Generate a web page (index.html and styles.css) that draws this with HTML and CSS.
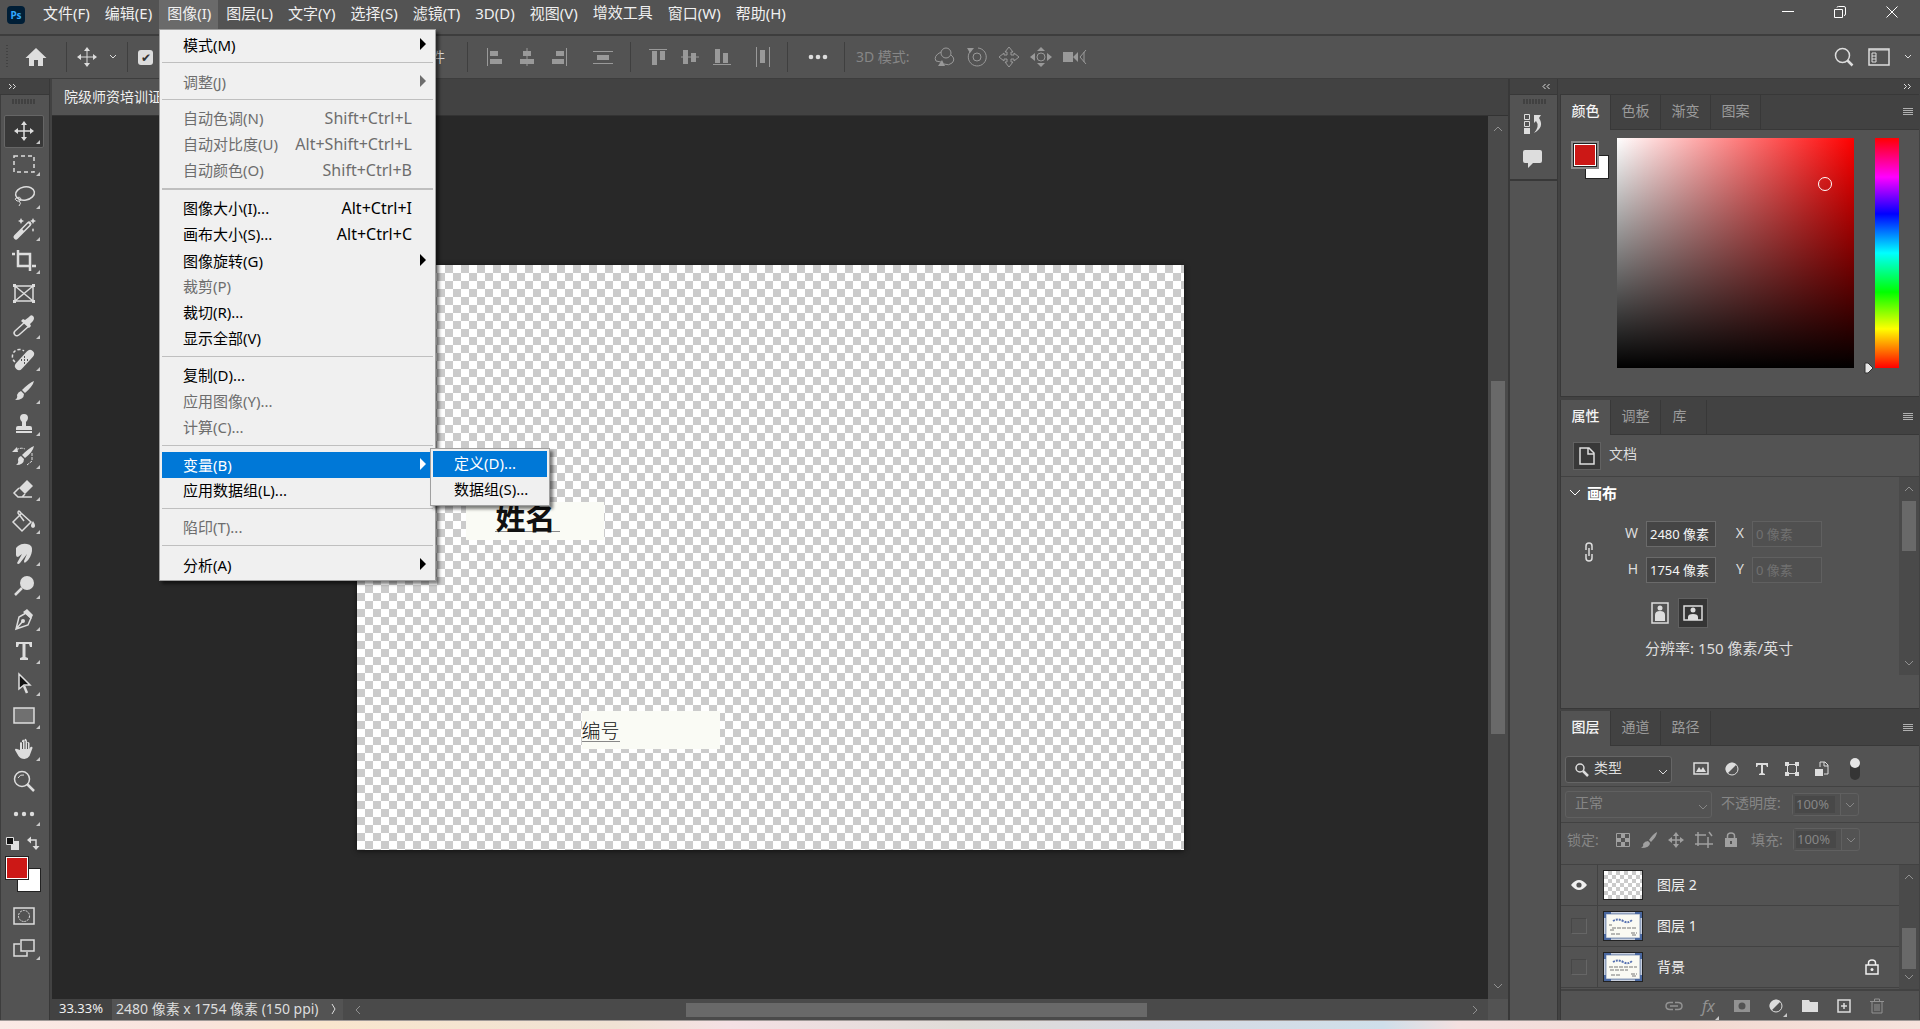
FILE: index.html
```html
<!DOCTYPE html>
<html lang="zh-CN">
<head>
    <meta charset="UTF-8">
    <meta name="viewport" content="width=device-width, initial-scale=1.0">
    <title>Photoshop</title>
    <link rel="stylesheet" href="styles.css">
</head>
<body>

<header class="menubar">
    <span class="logo">Ps</span>
    <nav class="menus">
        <button>文件(F)</button>
        <button>编辑(E)</button>
        <button class="open">图像(I)</button>
        <button>图层(L)</button>
        <button>文字(Y)</button>
        <button>选择(S)</button>
        <button>滤镜(T)</button>
        <button>3D(D)</button>
        <button>视图(V)</button>
        <button class="plugin">增效工具</button>
        <button>窗口(W)</button>
        <button>帮助(H)</button>
    </nav>
    <div class="window-buttons">
        <button aria-label="最小化"><svg width="14" height="14"><path d="M1 6.500h12" class="line"/></svg></button>
        <button aria-label="还原"><svg width="14" height="14"><path d="M1.500 4.500h8v8h-8zM4 2.500Q4 1.500 5.500 1.500H11q1.500 0 1.500 1.500v6q0 1.500-1.500 1.500" class="line"/></svg></button>
        <button aria-label="关闭"><svg width="14" height="14"><path d="M1.500 1.500l11 11M12.500 1.500l-11 11" class="line"/></svg></button>
    </div>
</header>

<div class="options">
    <span class="grip-v"></span>
    <button class="home" aria-label="主页"><svg width="22" height="20"><path d="M11 1L0.500 11H4v8h5v-6h4v6h5v-8h3.500z" class="fill"/></svg></button>
    <span class="divider"></span>
    <button class="current-tool" aria-label="移动工具">
        <svg width="20" height="20" viewBox="0 0 20 20"><path d="M10 3v14M3 10h14" class="line"/><path d="M10 0l3 4H7zM10 20l3-4H7zM0 10l4-3v6zM20 10l-4-3v6z" class="fill"/></svg>
        <svg width="8" height="6"><path d="M1 1l3 3 3-3" class="line"/></svg>
    </button>
    <span class="divider"></span>
    <div class="auto-select"><input type="checkbox" aria-label="自动选择" checked></div>
    <select class="auto-target" aria-label="自动选择对象"><option>图层</option></select>
    <label class="transform-controls"><input type="checkbox">显示变换控件</label>
    <span class="divider"></span>
    <div class="align-group">
        <button aria-label="左对齐"><svg width="18" height="20"><path d="M1.500 1v18" class="line"/><path d="M4 4h8v5H4zM4 12h12v5H4z" class="fill"/></svg></button>
        <button aria-label="水平居中对齐"><svg width="18" height="20"><path d="M9 1v18" class="line"/><path d="M5 4h8v5H5zM2 12h14v5H2z" class="fill"/></svg></button>
        <button aria-label="右对齐"><svg width="18" height="20"><path d="M16.500 1v18" class="line"/><path d="M6 4h8v5H6zM2 12h12v5H2z" class="fill"/></svg></button>
        <button class="spread" aria-label="垂直分布"><svg width="22" height="20"><path d="M1 4.500h20M1 16.500h20" class="line"/><path d="M5 8h12v5H5z" class="fill"/></svg></button>
    </div>
    <span class="divider"></span>
    <div class="align-group">
        <button aria-label="顶对齐"><svg width="18" height="20"><path d="M0 2.500h18" class="line"/><path d="M3 4h5v14H3zM11 4h5v9h-5z" class="fill"/></svg></button>
        <button aria-label="垂直居中对齐"><svg width="18" height="20"><path d="M0 10h18" class="line"/><path d="M2 3h5v14H2zM10 6h5v9h-5z" class="fill"/></svg></button>
        <button aria-label="底对齐"><svg width="18" height="20"><path d="M0 17.500h18" class="line"/><path d="M2 2h5v14H2zM10 6h5v10h-5z" class="fill"/></svg></button>
        <button class="spread" aria-label="水平分布"><svg width="16" height="22"><path d="M1.500 1v20M14.500 1v20" class="line"/><path d="M5 4h5v13H5z" class="fill"/></svg></button>
    </div>
    <span class="divider"></span>
    <button class="more" aria-label="更多"><svg width="20" height="6"><circle cx="3" cy="3" r="2.300" class="fill"/><circle cx="10" cy="3" r="2.300" class="fill"/><circle cx="17" cy="3" r="2.300" class="fill"/></svg></button>
    <span class="divider"></span>
    <span class="mode-label">3D 模式:</span>
    <div class="mode-icons">
        <svg width="22" height="20"><circle cx="13" cy="6" r="5" class="line"/><path d="M8 5q-8 4-5 9l5 1M18 8q5 4 1 8-3 3-8 1" class="line"/><path d="M5 19l4-6 3 6z" class="fill"/></svg>
        <svg width="22" height="20"><circle cx="11" cy="10" r="4" class="line"/><path d="M5 3.500a9 9 0 1 0 7-2.500" class="line"/><path d="M1 1h7l-4 5z" class="fill"/></svg>
        <svg width="20" height="20"><path d="M10 0l4 5h-2v3h3V6l5 4-5 4v-2h-3v3h2l-4 5-4-5h2v-3H5v2l-5-4 5-4v2h3V5H6z" class="line"/></svg>
        <svg width="22" height="20"><circle cx="11" cy="10" r="4" class="line"/><path d="M11 0l4 4H7zM11 20l4-4H7zM0 10l5-4v8zM22 10l-5-4v8z" class="fill"/></svg>
        <svg width="24" height="20"><path d="M0 5h10v10H0zM10 10l5-5v10z" class="fill"/><path d="M23 3l-6 7 6 7M21 5v10" class="line"/></svg>
    </div>
    <div class="options-end">
        <button aria-label="搜索"><svg width="20" height="20"><circle cx="8.500" cy="8.500" r="7" class="line thick"/><path d="M13.500 13.500l5 5" class="line heavy"/></svg></button>
        <button aria-label="工作区"><svg width="22" height="18"><path d="M1 1h20v16H1z" class="line thick"/><path d="M1 2h20M4 5h4v9H4zM4 8h4M4 11h4" class="line"/></svg></button>
        <button aria-label="选择工作区"><svg width="8" height="6"><path d="M1 1l3 3 3-3" class="line"/></svg></button>
    </div>
</div>

<div class="workspace">
    <aside class="toolbar">
        <div class="strip"><svg width="9" height="7"><path d="M1 1l2.500 2.500L1 6M5 1l2.500 2.500L5 6" class="line"/></svg></div>
        <div class="tool-body">
            <span class="grip"></span>
            <div class="tools">
                <button class="sub selected" aria-label="移动"><svg width="22" height="22" viewBox="0 0 22 22"><path d="M11 3v16M3 11h16" class="line thick"/><path d="M11 1l3 4H8zM11 21l3-4H8zM1 11l4-3v6zM21 11l-4-3v6z" class="fill"/></svg></button>
                <button class="sub" aria-label="矩形选框"><svg width="22" height="22"><path d="M1 3h20v16H1z" class="line thick" stroke-dasharray="4 3"/></svg></button>
                <button class="sub" aria-label="套索"><svg width="22" height="22"><ellipse cx="12" cy="8.500" rx="9.500" ry="6.500" transform="rotate(-10 12 8.500)" class="line thick"/><path d="M3 13q4-2 5 1 0 3-4 2-3-2-1-3M6 16q3 2 0 5" class="line"/></svg></button>
                <button class="sub" aria-label="魔棒"><svg width="24" height="22"><path d="M4 19L17 6" stroke-width="5" class="line cap"/><path d="M11 12l6-6" class="dark-line"/><path d="M9 0l1 2 2 1-2 1-1 2-1-2-2-1 2-1zM21 0l1 2 2 1-2 1-1 2-1-2-2-1 2-1zM21 10l1 2-1 2-1-2z" class="fill"/></svg></button>
                <button class="sub" aria-label="裁剪"><svg width="24" height="22"><path d="M6 0v16h12M0 4h3M6 4h12v17M20 16h4" class="line heavy"/></svg></button>
                <button aria-label="图框"><svg width="22" height="20"><path d="M2 2h18v15H2zM2 2l18 15M20 2L2 17" class="line thick"/><path d="M0 0h3v3H0zM19 0h3v3h-3zM0 16h3v3H0zM19 16h3v3h-3z" class="fill"/></svg></button>
                <button class="sub" aria-label="吸管"><svg width="22" height="22"><path d="M12 7l4 4-9 8q-3 3-5 1t0-4z" class="line thick"/><path d="M16 2q2-3 4-1t0 5l-3 3 1 2-2 2-8-7 2-2 2 1z" class="fill"/></svg></button>
                <button class="sub" aria-label="污点修复"><svg width="24" height="24"><path d="M3 15a7 7 0 1 1 9-11" class="line thick" stroke-dasharray="3 2"/><path d="M7 19L18 7" stroke-width="8" class="line cap"/><path d="M9 13h1M12 16h1M12 10h1M15 13h1M12 13h1" class="dark-line"/></svg></button>
                <button class="sub" aria-label="画笔"><svg width="22" height="22"><path d="M21 1q-1 5-9 12l-3-3Q16 3 21 1zM8 11l3 3q0 6-9 6 3-2 2-5 1-3 4-4z" class="fill"/></svg></button>
                <button class="sub" aria-label="仿制图章"><svg width="20" height="22"><path d="M10 1a4 4 0 0 1 4 4q0 2-2 4v4h4q2 0 2 2v2H2v-2q0-2 2-2h4V9Q6 7 6 5a4 4 0 0 1 4-4zM2 18h16v2H2z" class="fill"/></svg></button>
                <button class="sub" aria-label="历史记录画笔"><svg width="24" height="22"><path d="M22 1q-1 6-9 12l-3-3Q17 3 22 1zM9 11l3 3q0 6-8 6 3-2 2-5 0-3 3-4zM0 7l5-5 1 5z" class="fill"/><path d="M4 5q5-3 9-1M20 8v8l-5 4" class="line" stroke-dasharray="3 1"/></svg></button>
                <button class="sub" aria-label="橡皮擦"><svg width="22" height="20"><path d="M14 1l6 6-8 8-6-6z" class="fill"/><path d="M6 9l-5 5 4 4h4l3-3M5 18h14" class="line thick"/></svg></button>
                <button class="sub" aria-label="油漆桶"><svg width="24" height="22"><path d="M9 4L1 12l9 9 9-9L9 3q-3-4-3 0l6 8" class="line thick"/><path d="M21 11q4 6 0 7-4-1 0-7z" class="fill"/></svg></button>
                <button class="sub" aria-label="涂抹"><svg width="20" height="22"><path d="M4 3q4-3 9-2 6 1 5 7-1 7-6 11-2 2-2-1l3-7-7 9q-2 2-3 0l5-9-4 3q-2 0-2-2V5z" class="fill"/></svg></button>
                <button class="sub" aria-label="减淡"><svg width="22" height="22"><circle cx="14" cy="8" r="7" class="fill"/><path d="M9 13l-7 7" class="line heavy"/></svg></button>
                <button class="sub" aria-label="钢笔"><svg width="20" height="22"><path d="M12 5l5 5-3 7-12 4L5 9zM2 21l7-8" class="line thick"/><circle cx="9" cy="13" r="2" class="fill"/><path d="M13 1l6 6-2 4-8-7z" class="fill"/></svg></button>
                <button class="sub" aria-label="文字"><svg width="20" height="22"><path d="M2 2h16v5h-2l-1-3h-3.500v13l2.500 1v2H6v-2l2.500-1V4H5L4 7H2z" class="fill"/></svg></button>
                <button class="sub" aria-label="路径选择"><svg width="18" height="22"><path d="M9 13l3 7" class="line heavy"/><path d="M4 1l11 11H9l-5 4z" class="pointer"/></svg></button>
                <button class="sub" aria-label="矩形"><svg width="22" height="18"><path d="M1 1h20v15H1z" class="rect-tool"/></svg></button>
                <button class="sub" aria-label="抓手"><svg width="20" height="22"><path d="M6 12V5q1-2 2 0V3q1-3 2.500 0V2q1-3 2.500 1v2q1-2 2.500 0v6l1-2q2-1 2 1l-3 8q-2 3-5 3-4 0-6-3L1 12q0-2 2-1z" class="fill"/><path d="M8.500 4v7M11 3v8M13.500 5v6" class="dark-line thin"/></svg></button>
                <button aria-label="缩放"><svg width="22" height="22"><circle cx="9" cy="9" r="7.500" class="line thick"/><path d="M5 8q2-4 6-3" class="line"/><path d="M14 14l7 7" class="line heavy"/></svg></button>
                <button class="sub" aria-label="编辑工具栏"><svg width="22" height="8"><circle cx="3" cy="4" r="2.200" class="fill"/><circle cx="11" cy="4" r="2.200" class="fill"/><circle cx="19" cy="4" r="2.200" class="fill"/></svg></button>
            </div>
            <div class="mini">
                <button aria-label="默认颜色"><svg width="13" height="13"><path d="M5 4h8v9H5z" class="fill"/><path d="M.5.5h7v7h-7z" class="default-fg"/></svg></button>
                <button aria-label="切换颜色"><svg width="14" height="14"><path d="M3 4h6v7" class="line thick"/><path d="M0 4l4-3.500v7zM9 14l-3.500-4h7z" class="fill"/></svg></button>
            </div>
            <div class="swatches">
                <button class="bg" aria-label="背景色"></button>
                <button class="fg" aria-label="前景色"></button>
            </div>
            <div class="view-modes">
                <button aria-label="快速蒙版"><svg width="22" height="18"><path d="M1 1h20v16H1z" class="line thick"/><circle cx="11" cy="9" r="5.500" class="line" stroke-dasharray="2 1"/></svg></button>
                <button class="sub" aria-label="屏幕模式"><svg width="22" height="18"><path d="M8 1h13v11H8zM7 5H1v12h13v-4" class="line thick"/></svg></button>
            </div>
        </div>
    </aside>

    <main class="document">
        <div class="doc-tabs"><button>院级师资培训证</button></div>
        <div class="stage">
            <div class="viewport">
                <div class="artboard">
                    <div class="patch name"><u>姓名</u></div>
                    <div class="patch number"><u>编号</u></div>
                </div>
            </div>
            <div class="scroll-v">
                <svg width="10" height="6"><path d="M1 5l4-4 4 4" class="line"/></svg>
                <span class="thumb"></span>
                <svg width="10" height="6"><path d="M1 1l4 4 4-4" class="line"/></svg>
            </div>
        </div>
        <footer class="status">
            <span class="zoom">33.33%</span>
            <button class="doc-info">2480 像素 x 1754 像素 (150 ppi)
                <svg width="6" height="12"><path d="M1 1l3 5-3 5" class="line"/></svg>
            </button>
            <div class="scroll-h">
                <svg width="6" height="10"><path d="M5 1L1 5l4 4" class="line"/></svg>
                <span class="thumb"></span>
                <svg width="6" height="10"><path d="M1 1l4 4-4 4" class="line"/></svg>
            </div>
        </footer>
    </main>

    <aside class="dock">
        <div class="strip"><svg width="9" height="7"><path d="M3.500 1L1 3.500 3.500 6M7.500 1L5 3.500 7.500 6" class="line"/></svg></div>
        <div class="dock-icons">
            <span class="grip"></span>
            <button aria-label="历史记录"><svg width="20" height="22"><path d="M1.500 1.500h5v5h-5zM1.500 8.500h5v5h-5z" class="line"/><path d="M1 15h6v6H1zM11 2h7l-2 3q6 9-5 15 6-7 2-12l-2 2z" class="fill"/></svg></button>
            <button aria-label="注释"><svg width="20" height="20"><path d="M2 1h15q2 0 2 2v9q0 2-2 2h-7l-5 5v-5H2q-2 0-2-2V3q0-2 2-2z" class="fill"/></svg></button>
        </div>
        <div class="dock-rest"></div>
    </aside>

    <aside class="panels">
        <div class="strip"><svg width="9" height="7"><path d="M1 1l2.500 2.500L1 6M5 1l2.500 2.500L5 6" class="line"/></svg></div>

        <section class="panel color-panel">
            <div class="tabs">
                <button class="active">颜色</button><button>色板</button><button>渐变</button><button>图案</button>
                <span class="burger"></span>
            </div>
            <div class="color-body">
                <div class="swatches">
                    <button class="bg" aria-label="背景色"></button>
                    <button class="fg" aria-label="前景色"></button>
                </div>
                <div class="field"><span class="ring"></span></div>
                <div class="hue"><svg class="marker" width="10" height="12"><path d="M1 1h3l5 5-5 5H1z"/></svg></div>
            </div>
        </section>

        <section class="panel props-panel">
            <div class="tabs">
                <button class="active">属性</button><button>调整</button><button class="short">库</button>
                <span class="burger"></span>
            </div>
            <div class="doc-row">
                <span class="doc-icon"><svg width="16" height="18"><path d="M1 1h9l5 5v11H1zM9 1v6h6" class="line thick"/></svg></span>
                <span class="doc-label">文档</span>
            </div>
            <div class="props">
                <div class="props-main">
                    <h3><svg width="12" height="8"><path d="M1 1l5 5 5-5" class="line"/></svg>画布</h3>
                    <div class="size-grid">
                        <svg class="chain" width="12" height="20"><path d="M3 8V4q0-3 3-3t3 3v4M3 12v4q0 3 3 3t3-3v-4M6 6v8" class="line thick"/></svg>
                        <label for="w">W</label><input id="w" value="2480 像素">
                        <label for="x">X</label><input id="x" value="0 像素" disabled>
                        <label for="h">H</label><input id="h" value="1754 像素">
                        <label for="y">Y</label><input id="y" value="0 像素" disabled>
                    </div>
                    <div class="orient">
                        <button aria-label="纵向"><svg width="18" height="22"><path d="M1 1h16v20H1z" class="line thick"/><circle cx="9" cy="6" r="2.500" class="fill"/><path d="M4 19v-6q0-4 5-4t5 4v6z" class="fill"/></svg></button>
                        <button class="on" aria-label="横向"><svg width="20" height="16"><path d="M1 1h18v14H1z" class="line thick"/><circle cx="10" cy="5" r="2.500" class="fill"/><path d="M5 15v-3q0-3 5-3t5 3v3z" class="fill"/></svg></button>
                    </div>
                    <p>分辨率: 150 像素/英寸</p>
                </div>
                <div class="scroll-v">
                    <svg width="10" height="6"><path d="M1 5l4-4 4 4" class="line"/></svg>
                    <span class="thumb"></span>
                    <svg width="10" height="6"><path d="M1 1l4 4 4-4" class="line"/></svg>
                </div>
            </div>
        </section>

        <section class="panel layers-panel">
            <div class="tabs">
                <button class="active">图层</button><button>通道</button><button>路径</button>
                <span class="burger"></span>
            </div>
            <div class="filter-row">
                <div class="pick kind">
                    <svg class="lens" width="14" height="14"><circle cx="5" cy="5" r="4" class="line thick"/><path d="M8 8l5 5" class="line heavy"/></svg>
                    <select aria-label="筛选类型"><option>类型</option></select>
                    <svg class="caret" width="10" height="6"><path d="M1 1l4 4 4-4" class="line"/></svg>
                </div>
                <div class="filters">
                    <button aria-label="像素图层"><svg width="16" height="14"><path d="M1 1h14v11H1z" class="line thick"/><path d="M3 10l3-5 2 3 2-3 3 5z" class="fill"/></svg></button>
                    <button aria-label="调整图层"><svg width="14" height="14"><circle cx="7" cy="7" r="6" class="line"/><path d="M11.500 2.500A6.300 6.300 0 1 0 2.500 11.500z" class="fill"/></svg></button>
                    <button aria-label="文字图层"><svg width="14" height="14"><path d="M1 1h12v4h-1l-1-2H8v8l2 1v1H4v-1l2-1V3H3L2 5H1z" class="fill"/></svg></button>
                    <button aria-label="形状图层"><svg width="14" height="14"><path d="M2.500 2.500h9v9h-9z" class="line"/><path d="M0 0h4v4H0zM10 0h4v4h-4zM0 10h4v4H0zM10 10h4v4h-4z" class="fill"/></svg></button>
                    <button aria-label="智能对象"><svg width="14" height="16"><path d="M5 6V1h5l3 3v9H9M9 1v4h4" class="line"/><path d="M0 8h8v7H0z" class="fill"/></svg></button>
                    <input type="checkbox" class="toggle" aria-label="打开图层过滤" checked>
                </div>
            </div>
            <div class="blend-row">
                <div class="pick blend">
                    <select aria-label="混合模式" disabled><option>正常</option></select>
                    <svg class="caret" width="10" height="6"><path d="M1 1l4 4 4-4" class="line"/></svg>
                </div>
                <label for="opacity">不透明度:</label>
                <div class="percent"><input id="opacity" value="100%" disabled><button disabled aria-label="不透明度滑块"><svg width="10" height="6"><path d="M1 1l4 4 4-4" class="line"/></svg></button></div>
            </div>
            <div class="lock-row">
                <span>锁定:</span>
                <div class="locks">
                    <svg width="14" height="14"><path d="M.5.5h13v13H.5z" class="line"/><path d="M5 1h4v4H5zM1 5h4v4H1zM9 5h4v4H9zM5 9h4v4H5z" class="fill"/></svg>
                    <svg width="16" height="16"><path d="M16 0q0 4-6 10L8 8q4-6 8-8zM7 9l2 2q0 5-9 5 3-2 2-4 2-3 5-3z" class="fill"/></svg>
                    <svg width="16" height="16"><path d="M8 2v12M2 8h12" class="line thick"/><path d="M8 0l3 4H5zM8 16l3-4H5zM0 8l4-3v6zM16 8l-4-3v6z" class="fill"/></svg>
                    <svg width="18" height="16"><path d="M3 0v14M0 3h11M13 5v11M0 12h18M14 0l3 4" class="line thick"/></svg>
                    <svg width="14" height="16"><path d="M3.500 7V4q0-3 3.500-3t3.500 3v3" class="line thick"/><path d="M1 6h12v9H1z" class="fill"/><path d="M7 9v3" class="dark-line"/></svg>
                </div>
                <label for="fill">填充:</label>
                <div class="percent"><input id="fill" value="100%" disabled><button disabled aria-label="填充滑块"><svg width="10" height="6"><path d="M1 1l4 4 4-4" class="line"/></svg></button></div>
            </div>
            <div class="layers">
                <ul>
                    <li>
                        <span class="vis"><svg width="16" height="10"><path d="M0 5q8-10 16 0-8 10-16 0z" class="fill"/><circle cx="8" cy="5" r="2.600" class="iris"/></svg></span>
                        <span class="thumbnail clear"></span>图层 2
                    </li>
                    <li>
                        <span class="vis"><span class="off"></span></span>
                        <span class="thumbnail"><svg width="38" height="28"><path d="M1.500 1.500h35v25h-35z" class="cert"/><path d="M1 6V1h6M31 1h6v5M37 22v5h-6M7 27H1v-5" class="cert-corner"/><path d="M9 9q5-3 10 0t9-1" class="cert-title"/><path d="M5 13h3M8 16h24M6 18h5M7 22h9M27 21h6M28 23h5" class="cert-text"/></svg></span>图层 1
                    </li>
                    <li>
                        <span class="vis"><span class="off"></span></span>
                        <span class="thumbnail"><svg width="38" height="28"><path d="M1.500 1.500h35v25h-35z" class="cert"/><path d="M1 6V1h6M31 1h6v5M37 22v5h-6M7 27H1v-5" class="cert-corner"/><path d="M9 9q5-3 10 0t9-1" class="cert-title"/><path d="M5 14h28M6 17h18M7 22h9M27 21h6M28 23h5" class="cert-text"/></svg></span>背景
                        <svg class="padlock" width="14" height="16"><path d="M3.500 6V4q0-3 3.500-3t3.500 3v2M1 6h12v9H1z" class="line thick"/><circle cx="7" cy="10.500" r="1.500" class="fill"/></svg>
                    </li>
                </ul>
                <div class="scroll-v">
                    <svg width="10" height="6"><path d="M1 5l4-4 4 4" class="line"/></svg>
                    <span class="thumb"></span>
                    <svg width="10" height="6"><path d="M1 1l4 4 4-4" class="line"/></svg>
                </div>
            </div>
            <div class="layer-actions">
                <button disabled aria-label="链接图层"><svg width="18" height="10"><path d="M8 1.500H5q-4 0-4 3.500t4 3.500h3M10 1.500h3q4 0 4 3.500t-4 3.500h-3M5 5h8" class="line thick"/></svg></button>
                <button disabled class="fx sub">fx</button>
                <button disabled aria-label="添加蒙版"><svg width="16" height="12"><path d="M0 0h16v12H0z" class="fill"/><circle cx="8" cy="6" r="3.500" class="hole"/></svg></button>
                <button class="sub" aria-label="新建调整图层"><svg width="14" height="14"><circle cx="7" cy="7" r="6" class="line"/><path d="M11.500 2.500A6.300 6.300 0 1 0 2.500 11.500z" class="fill"/></svg></button>
                <button aria-label="新建组"><svg width="16" height="14"><path d="M0 1h7l1 2h8v10H0z" class="fill"/></svg></button>
                <button aria-label="新建图层"><svg width="14" height="14"><path d="M1 1h12v12H1zM7 4v6M4 7h6" class="line thick"/></svg></button>
                <button disabled aria-label="删除图层"><svg width="14" height="16"><path d="M0 3.500h14M4.500 3V1h5v2M2 4v11h10V4M5 6v7M7 6v7M9 6v7" class="line"/></svg></button>
            </div>
        </section>
    </aside>
</div>

<div class="desktop"></div>

<div class="popup image-menu" role="menu">
    <button class="has-sub" role="menuitem">模式(M)</button>
    <hr>
    <button class="has-sub" role="menuitem" disabled>调整(J)</button>
    <hr>
    <button role="menuitem" disabled>自动色调(N)<kbd>Shift+Ctrl+L</kbd></button>
    <button role="menuitem" disabled>自动对比度(U)<kbd>Alt+Shift+Ctrl+L</kbd></button>
    <button role="menuitem" disabled>自动颜色(O)<kbd>Shift+Ctrl+B</kbd></button>
    <hr class="double">
    <button role="menuitem">图像大小(I)...<kbd>Alt+Ctrl+I</kbd></button>
    <button role="menuitem">画布大小(S)...<kbd>Alt+Ctrl+C</kbd></button>
    <button class="has-sub" role="menuitem">图像旋转(G)</button>
    <button role="menuitem" disabled>裁剪(P)</button>
    <button role="menuitem">裁切(R)...</button>
    <button role="menuitem">显示全部(V)</button>
    <hr>
    <button role="menuitem">复制(D)...</button>
    <button role="menuitem" disabled>应用图像(Y)...</button>
    <button role="menuitem" disabled>计算(C)...</button>
    <hr>
    <button class="has-sub current" role="menuitem">变量(B)</button>
    <button role="menuitem">应用数据组(L)...</button>
    <hr>
    <button role="menuitem" disabled>陷印(T)...</button>
    <hr>
    <button class="has-sub" role="menuitem">分析(A)</button>
</div>

<div class="popup variable-menu" role="menu">
    <button class="current" role="menuitem">定义(D)...</button>
    <button role="menuitem">数据组(S)...</button>
</div>

</body>
</html>
```
FILE: styles.css
```css
* {
    box-sizing: border-box;
}
body {
    margin: 0;
    height: 100vh;
    display: flex;
    flex-direction: column;
    overflow: hidden;
    background: #535353;
    color: #dddddd;
    font-family: "Noto Sans", "Noto Sans CJK SC", sans-serif;
    font-size: 14px;
    line-height: 20px;
}
button, input, select {
    font: inherit;
    color: inherit;
}
button {
    padding: 0;
    border: 0;
    background: none;
}
svg {
    display: block;
    flex: none;
    overflow: visible;
}

/* icon strokes and fills */
.line {
    fill: none;
    stroke: currentColor;
}
.thick {
    stroke-width: 1.5;
}
.heavy {
    stroke-width: 2.5;
}
.cap {
    stroke-linecap: round;
}
.fill {
    fill: currentColor;
}
.dark-line {
    fill: none;
    stroke: #535353;
    stroke-width: 2;
}
.dark-line.thin {
    stroke-width: 1;
}
.hole, .iris {
    fill: #535353;
}

/* menu bar */
.menubar {
    display: flex;
    height: 34px;
    flex: none;
    padding-left: 7px;
    color: #f0f0f0;
    font-size: 15px;
}
.logo {
    width: 18px;
    height: 18px;
    margin: 6px 10px 0 0;
    border-radius: 4px;
    background: #001e36;
    color: #31a8ff;
    font-size: 10px;
    font-weight: bold;
    line-height: 18px;
    text-align: center;
}
.menus {
    display: flex;
    height: 29px;
}
.menus button {
    padding: 0 7px 3px 8px;
    white-space: nowrap;
}
.menus .open {
    background: #6a6a6a;
}
.menus .plugin {
    padding-bottom: 5px;
}
.window-buttons {
    display: flex;
    gap: 38px;
    margin-left: auto;
    padding: 5px 21px 0 0;
    align-items: flex-start;
    color: #fff;
}

/* options bar */
.options {
    display: flex;
    flex: none;
    align-items: center;
    height: 45px;
    padding: 0 8px 0 6px;
    border-top: 2px solid #3d3d3d;
    border-bottom: 1px solid #3d3d3d;
    white-space: nowrap;
}
.grip-v {
    width: 2px;
    height: 24px;
    margin-right: 17px;
    background: repeating-linear-gradient(#424242 0 1px, transparent 1px 3px);
}
.divider {
    width: 1px;
    height: 30px;
    flex: none;
    background: #3f3f3f;
}
.home {
    margin-right: 19px;
}
.current-tool {
    display: flex;
    align-items: center;
    gap: 12px;
    padding: 0 10px;
}
.auto-select, .transform-controls {
    display: flex;
    align-items: center;
    gap: 8px;
    width: 110px;
    padding-left: 10px;
    flex: none;
}
.options input[type="checkbox"] {
    appearance: none;
    width: 15px;
    height: 15px;
    margin: 0;
    border-radius: 3px;
    background: #dddddd;
    color: #333;
    line-height: 15px;
    text-align: center;
}
.options input:checked::before {
    content: "✔";
    display: block;
    font-size: 12px;
}
.auto-target {
    width: 90px;
    border: 1px solid #666;
    background: #454545;
    flex: none;
}
.transform-controls {
    width: 139px;
}
.transform-controls input {
    flex: none;
}
.align-group {
    display: flex;
    align-items: center;
    gap: 14px;
    padding: 0 16px 0 18px;
    color: #999999;
}
.align-group .spread {
    margin-left: 10px;
}
.more {
    padding: 0 16px 0 20px;
}
.mode-label {
    margin-left: 11px;
    width: 77px;
    color: #868686;
}
.mode-icons {
    display: flex;
    gap: 11px;
    color: #999999;
}
.options-end {
    display: flex;
    align-items: center;
    gap: 14px;
    margin-left: auto;
}

/* workspace columns */
.workspace {
    display: flex;
    flex: 1;
    min-height: 0;
    background: #424242;
}
.strip {
    display: flex;
    align-items: center;
    height: 16px;
    flex: none;
    border-bottom: 1px solid #383838;
}
.grip {
    display: block;
    width: 24px;
    height: 5px;
    background: repeating-linear-gradient(90deg, #414141 0 2px, transparent 2px 3px);
}
.toolbar {
    display: flex;
    flex-direction: column;
    width: 50px;
    margin-right: 2px;
    border-right: 1px solid #383838;
}
.toolbar .strip {
    padding-left: 8px;
}
.tool-body {
    flex: 1;
    padding: 4px 0 0 3px;
    border-left: 1px solid #3d3d3d;
    background: #535353;
}
.tool-body .grip {
    margin: 0 0 11px 8px;
}
.tools {
    display: grid;
    grid-auto-rows: 1fr;
    width: 40px;
    height: 715px;
}
.tools button, .view-modes button {
    position: relative;
    display: grid;
    place-items: center;
    border: 1px solid transparent;
    border-radius: 2px;
}
.tools .selected {
    background: #383838;
    border-color: #666;
}
.sub {
    position: relative;
}
.sub::after {
    content: "";
    position: absolute;
    right: 3px;
    bottom: 3px;
    border: 2px solid transparent;
    border-right-color: #c8c8c8;
    border-bottom-color: #c8c8c8;
}
.pointer {
    fill: #111;
    stroke: #dddddd;
    stroke-width: 1.5;
}
.rect-tool {
    fill: #707070;
    stroke: #dddddd;
    stroke-width: 1.5;
}
.default-fg {
    fill: #111;
    stroke: #dddddd;
}
.mini {
    display: flex;
    gap: 8px;
    padding: 6px 0 6px 2px;
}
.swatches {
    position: relative;
    width: 36px;
    height: 36px;
}
.tool-body .swatches {
    margin-left: 1px;
}
.swatches button {
    position: absolute;
    width: 24px;
    height: 24px;
    border: 1px solid #222;
}
.swatches .fg {
    left: 0;
    top: 0;
    background: #cc1816;
    box-shadow: inset 0 0 0 1px #fff;
}
.swatches .bg {
    right: 0;
    bottom: 0;
    background: #fff;
}
.view-modes {
    display: grid;
    width: 40px;
    grid-auto-rows: 32px;
    margin-top: 8px;
}

/* document window */
.document {
    display: flex;
    flex-direction: column;
    flex: 1;
    min-width: 0;
}
.doc-tabs {
    height: 37px;
    flex: none;
    border-bottom: 1px solid #333;
}
.doc-tabs button {
    width: 108px;
    height: 36px;
    padding-left: 12px;
    background: #535353;
    color: #f0f0f0;
    text-align: left;
    white-space: nowrap;
    overflow: hidden;
}
.stage {
    display: flex;
    flex: 1;
    min-height: 0;
}
.viewport {
    display: grid;
    place-items: center;
    flex: 1;
    background: #282828;
    overflow: hidden;
}
.artboard {
    position: relative;
    width: 827px;
    height: 585px;
    background: conic-gradient(#cbcbcb 25%, #fff 0 50%, #cbcbcb 0 75%, #fff 0) 0 0 / 16px 16px;
    box-shadow: 0 1px 5px #111;
}
.patch {
    position: absolute;
    width: 138px;
    height: 38px;
    background: #fafbf5;
    color: #111;
    font-family: "Noto Sans CJK SC", sans-serif;
}
.patch u {
    display: inline-block;
    text-decoration: none;
    border-bottom: 1px solid #888;
}
.patch.name {
    left: 109px;
    top: 237px;
    padding-left: 29px;
    font-size: 30px;
    font-weight: bold;
    line-height: 28px;
}
.patch.name u {
    padding: 0 4px 1px 1px;
}
.patch.number {
    left: 225px;
    top: 446px;
    padding-top: 8px;
    font-size: 19px;
    font-weight: 300;
    line-height: 22px;
}
.scroll-v {
    display: flex;
    flex-direction: column;
    align-items: center;
    justify-content: space-between;
    width: 20px;
    flex: none;
    padding: 9px 0;
    background: #4a4a4a;
    color: #909090;
}
.scroll-v .thumb {
    width: 14px;
    background: #696969;
}
.stage .scroll-v {
    padding: 10px 0;
}
.stage .thumb {
    height: 353px;
}
.status {
    display: flex;
    align-items: center;
    height: 21px;
    flex: none;
    background: #4a4a4a;
}
.zoom {
    width: 60px;
    padding: 0 0 2px 7px;
    font-size: 13px;
    line-height: 19px;
    color: #f0f0f0;
    background: #424242;
}
.doc-info {
    display: flex;
    align-items: center;
    gap: 12px;
    padding: 0 6px 2px 4px;
    line-height: 19px;
    background: #535353;
    white-space: nowrap;
}
.scroll-h {
    display: flex;
    flex: 1;
    align-items: center;
    justify-content: space-between;
    padding: 0 10px 0 12px;
    height: 21px;
    border-right: 20px solid #535353;
    color: #909090;
}
.scroll-h .thumb {
    width: 461px;
    height: 14px;
    background: #696969;
}

/* collapsed dock */
.dock {
    display: flex;
    flex-direction: column;
    width: 50px;
    border-left: 2px solid #383838;
    border-right: 1px solid #383838;
}
.dock .strip {
    justify-content: flex-end;
    padding-right: 6px;
}
.dock-icons {
    display: flex;
    flex-direction: column;
    gap: 14px;
    height: 86px;
    padding: 4px 0 0 13px;
    background: #535353;
    border-bottom: 2px solid #383838;
}
.dock-icons .grip {
    margin-bottom: -5px;
    flex: none;
}
.dock-icons button {
    width: 20px;
}
.dock-rest {
    flex: 1;
    background: #535353;
}

/* panels */
.panels {
    display: flex;
    flex-direction: column;
    width: 362px;
    flex: none;
    padding: 0 1px 0 2px;
}
.panels .strip {
    justify-content: flex-end;
    padding-right: 7px;
}
.panel {
    border-left: 1px solid #383838;
    background: #535353;
}
.tabs {
    display: flex;
    height: 35px;
    border-bottom: 1px solid #383838;
    background: #424242;
}
.tabs button {
    width: 50px;
    height: 34px;
    padding-bottom: 3px;
    border-right: 1px solid #383838;
    color: #9c9c9c;
}
.tabs .active {
    height: 35px;
    padding-bottom: 4px;
    background: #535353;
    color: #f5f5f5;
    font-weight: 500;
}
.tabs .short {
    width: 46px;
    padding-right: 8px;
}
.burger {
    width: 10px;
    height: 8px;
    margin: 13px 6px 0 auto;
    background: repeating-linear-gradient(#b0b0b0 0 1px, transparent 1px 2px);
}
.color-panel {
    height: 302px;
    flex: none;
    border-bottom: 1px solid #383838;
}
.color-body {
    display: flex;
    height: 266px;
    padding: 8px 20px 28px 10px;
}
.color-body .swatches {
    width: 38px;
    height: 38px;
    margin: 3px 8px 0 0;
}
.color-body .fg {
    box-shadow: inset 0 0 0 1px #fff, 0 0 0 2px #8c8c8c;
    left: 2px;
    top: 2px;
}
.field {
    position: relative;
    flex: 1;
    background: linear-gradient(transparent, #000), linear-gradient(90deg, #fff, #f00);
}
.ring {
    position: absolute;
    left: 85%;
    top: 17%;
    width: 14px;
    height: 14px;
    border: 1px solid #fff;
    border-radius: 50%;
}
.hue {
    position: relative;
    width: 24px;
    margin-left: 21px;
    background: linear-gradient(#f00, #f0f 17%, #00f 33%, #0ff 50%, #0f0 67%, #ff0 83%, #f00);
}
.marker {
    position: absolute;
    left: -11px;
    bottom: -6px;
    fill: #e8e8e8;
    stroke: #333;
}
.props-panel {
    height: 309px;
    flex: none;
    margin-top: 3px;
    border-bottom: 1px solid #383838;
}
.doc-row {
    display: flex;
    align-items: center;
    gap: 8px;
    height: 42px;
    padding-left: 12px;
    border-bottom: 1px solid #424242;
}
.doc-label {
    padding-bottom: 3px;
}
.doc-icon {
    display: grid;
    place-items: center;
    width: 28px;
    height: 28px;
    border: 1px solid #626262;
    background: #383838;
}
.props {
    display: flex;
    height: 198px;
}
.props-main {
    flex: 1;
}
.props .thumb {
    height: 50px;
    margin-bottom: 101px;
}
.props h3 {
    display: flex;
    align-items: center;
    gap: 6px;
    margin: 6px 0 18px 8px;
    color: #fff;
    font-size: 15px;
    line-height: 20px;
}
.size-grid {
    display: grid;
    grid-template-columns: 40px 29px 70px 20px 70px;
    grid-auto-rows: 26px;
    gap: 10px 8px;
    align-items: center;
}
.chain {
    grid-row: 1 / 3;
    margin-left: 22px;
}
.size-grid label {
    padding-bottom: 2px;
    text-align: right;
}
.size-grid input {
    width: 70px;
    height: 26px;
    padding: 0 0 2px 3px;
    border: 1px solid #6a6a6a;
    background: #454545;
    color: #f5f5f5;
    font-size: 13px;
}
.size-grid input:disabled {
    border-color: #606060;
    background: #505050;
    color: #707070;
}
.orient {
    display: flex;
    gap: 3px;
    margin: 15px 0 10px 84px;
}
.orient button {
    display: grid;
    place-items: center;
    width: 30px;
    height: 30px;
}
.orient .on {
    border: 1px solid #606060;
    background: #353535;
}
.props p {
    margin: 0 0 0 84px;
    font-size: 15px;
}
.layers-panel {
    display: flex;
    flex-direction: column;
    flex: 1;
    min-height: 0;
    margin-top: 2px;
}
.filter-row, .blend-row, .lock-row {
    display: flex;
    align-items: center;
    padding-left: 4px;
    flex: none;
    border-bottom: 1px solid #424242;
}
.filter-row {
    height: 41px;
    padding-top: 6px;
}
.blend-row, .lock-row {
    height: 36px;
    color: #868686;
}
.pick {
    position: relative;
    width: 107px;
    height: 27px;
    border: 1px solid #666;
    border-radius: 3px;
    background: #454545;
}
.pick select {
    appearance: none;
    width: 100%;
    height: 100%;
    padding: 0 0 3px 28px;
    border: 0;
    background: none;
    opacity: 1;
}
.lens {
    position: absolute;
    left: 9px;
    top: 6px;
}
.caret {
    position: absolute;
    right: 3px;
    top: 12px;
}
.blend {
    width: 147px;
    margin-right: 9px;
    background: none;
    border-color: #606060;
}
.blend select {
    padding-left: 9px;
}
.blend-row label {
    width: 71px;
    padding-bottom: 3px;
    white-space: nowrap;
}
.filters {
    display: flex;
    align-items: center;
    gap: 16px;
    margin-left: 21px;
}
.toggle {
    appearance: none;
    width: 10px;
    height: 22px;
    margin: 0 0 0 5px;
    border-radius: 5px;
    background: #353535;
}
.toggle::before {
    content: "";
    display: block;
    width: 10px;
    height: 10px;
    border-radius: 5px;
    background: #e4e4e4;
}
.percent {
    display: flex;
    width: 67px;
    height: 23px;
    border: 1px solid #606060;
    border-radius: 3px;
}
.percent input {
    width: 47px;
    padding: 0 0 2px 1px;
    border: 2px solid #505050;
    border-right-width: 5px;
    background: #484848;
    font-size: 13px;
}
.percent button {
    display: grid;
    place-items: center;
    flex: 1;
    border-left: 1px solid #606060;
}
.lock-row {
    height: 42px;
    padding: 0 0 8px 6px;
}
.locks {
    display: flex;
    align-items: center;
    gap: 11px;
    width: 135px;
    margin-left: 13px;
    color: #a0a0a0;
}
.lock-row > span, .lock-row label {
    width: 36px;
    white-space: nowrap;
}
.lock-row label {
    width: 42px;
}
.layers {
    display: flex;
    flex: 1;
    min-height: 0;
}
.layers ul {
    flex: 1;
    margin: 0;
    padding: 0;
    list-style: none;
}
.layers li {
    display: flex;
    align-items: center;
    height: 41px;
    border-bottom: 1px solid #424242;
    color: #f0f0f0;
}
.vis {
    display: grid;
    place-items: center;
    align-self: stretch;
    width: 37px;
    border-right: 1px solid #424242;
}
.off {
    width: 16px;
    height: 16px;
    border: 1px solid #474747;
    border-right-color: #666;
    border-bottom-color: #666;
}
.thumbnail {
    width: 40px;
    height: 30px;
    margin: 0 14px 0 5px;
    border: 1px solid #222;
    background: #fff;
}
.clear {
    background: conic-gradient(#cbcbcb 25%, #fff 0 50%, #cbcbcb 0 75%, #fff 0) 0 0 / 8px 8px;
}
.cert {
    fill: #fafaf3;
    stroke: #8fa0bd;
    stroke-width: 2;
}
.cert-corner {
    fill: none;
    stroke: #4a68a0;
    stroke-width: 2;
}
.cert-title {
    fill: none;
    stroke: #5570b0;
    stroke-width: 2;
    stroke-dasharray: 2 1;
}
.cert-text {
    stroke: #777;
    stroke-dasharray: 4 1;
}
.padlock {
    margin: 0 20px 0 auto;
}
.layers .thumb {
    height: 41px;
    margin-top: 42px;
}
.layer-actions {
    display: flex;
    align-items: center;
    justify-content: space-between;
    height: 31px;
    flex: none;
    padding: 0 35px 0 104px;
    border-top: 2px solid #424242;
}
.layer-actions button:disabled {
    color: #929292;
}
.layer-actions .sub::after {
    right: -4px;
    bottom: -4px;
}
.fx {
    font-size: 16px;
    font-style: italic;
}
.desktop {
    height: 9px;
    flex: none;
    border-top: 1px solid #a09a98;
    background: linear-gradient(90deg, #fbeae6, #f9e3dd 10%, #f9e6ce 17%, #f0e2d4 32%, #f5e0e4 38%, #e0dcd8 50%, #d8dae2 60%, #cfdfea 72%, #f4e0e0 76%, #f3dad2 88%, #f6e2dc);
}

/* drop-down menus */
.popup {
    position: absolute;
    display: flex;
    flex-direction: column;
    padding: 2px;
    border: 1px solid #a0a0a0;
    background: #f0f0f0;
    color: #000;
    font-size: 15px;
    box-shadow: 3px 3px 3px rgba(0, 0, 0, 0.5);
}
.popup button {
    display: flex;
    align-items: center;
    justify-content: space-between;
    height: 26px;
    padding: 0 21px 3px;
    white-space: nowrap;
}
.popup button:disabled {
    color: #6d6d6d;
}
.popup .has-sub {
    position: relative;
    padding-top: 3px;
}
.popup .has-sub::after {
    content: "";
    position: absolute;
    right: 7px;
    top: 6px;
    border: 6px solid transparent;
    border-left-color: currentColor;
    border-right-width: 0;
}
.popup .current {
    background: #0078d7;
    color: #fff;
}
.popup hr {
    width: 100%;
    height: 1px;
    margin: 4px 0 6px;
    border: 0;
    background: #bfbfbf;
}
.popup .double {
    height: 2px;
}
.popup kbd {
    font: inherit;
    font-size: 16px;
}
.image-menu {
    left: 159px;
    top: 29px;
    width: 277px;
}
.variable-menu {
    left: 430px;
    top: 448px;
    width: 120px;
}
```
